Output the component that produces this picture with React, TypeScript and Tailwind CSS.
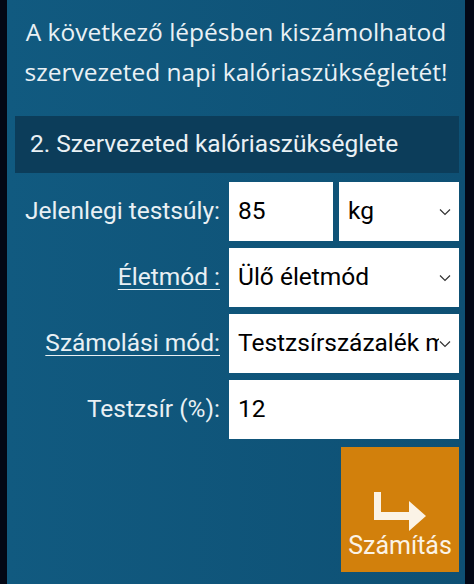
import React from 'react';

function Chevron() {
  return (
    <svg width="12" height="8" viewBox="0 0 12 8" className="shrink-0">
      <path d="M1 1.5 L6 6.5 L11 1.5" fill="none" stroke="#333" strokeWidth="1.2" />
    </svg>
  );
}

function TextBox({ value }: { value: string }) {
  return (
    <div className="h-[59px] bg-white flex items-center pl-[9px] text-[24.5px] text-black overflow-hidden whitespace-nowrap">
      {value}
    </div>
  );
}

function SelectBox({ value }: { value: string }) {
  return (
    <div className="h-[59px] bg-white flex items-center pl-[9px] pr-[8px] text-[24.5px] text-black">
      <span className="flex-1 overflow-hidden whitespace-nowrap">{value}</span>
      <Chevron />
    </div>
  );
}

function Label({ children, underline }: { children: React.ReactNode; underline?: boolean }) {
  return (
    <div className="h-[59px] flex items-center justify-end text-[24.5px] text-[#e9f0f4] whitespace-nowrap">
      <span className={underline ? 'underline underline-offset-[4px] decoration-1' : ''}>{children}</span>
    </div>
  );
}

function ArrowIcon() {
  return (
    <svg width="52" height="39" viewBox="0 0 52 39">
      <path d="M0 0 H7 V20 H35 V9 L52 24 L35 39 V28 H0 Z" fill="#fbf3e6" />
    </svg>
  );
}

export default function App() {
  return (
    <div className="w-full h-[584px] bg-[#030816] flex pl-[7px] pr-[9px] overflow-hidden">
      <div className="flex-1 bg-gradient-to-r from-[#115a80] to-[#0e5074] flex flex-col">
        <p className="pt-[12px] text-center text-[24.5px] leading-[40px] text-[#eaf1f5] font-['Open_Sans',sans-serif]">
          A következő lépésben kiszámolhatod
          <br />
          szervezeted napi kalóriaszükségletét!
        </p>
        <div className="font-['Roboto',sans-serif] ml-[8px] mr-[6px]">
          <div className="mt-[24px] h-[57px] bg-[#0c3d5a] flex items-center pl-[15px] text-[24.5px] text-[#eaf1f5]">
            2. Szervezeted kalóriaszükséglete
          </div>
          <div className="mt-[9px] grid grid-cols-[1fr_230px] gap-x-[9px] gap-y-[7px]">
            <Label>Jelenlegi testsúly:</Label>
            <div className="grid grid-cols-[104px_1fr] gap-[6px]">
              <TextBox value="85" />
              <SelectBox value="kg" />
            </div>
            <Label underline>Életmód :</Label>
            <SelectBox value="Ülő életmód" />
            <Label underline>Számolási mód:</Label>
            <SelectBox value="Testzsírszázalék módszer" />
            <Label>Testzsír (%):</Label>
            <TextBox value="12" />
          </div>
          <div className="mt-[8px] flex justify-end">
            <button className="w-[118px] h-[125px] bg-[#d2800c] flex flex-col items-center pt-[45px]">
              <ArrowIcon />
              <span className="mt-[1px] text-[25px] leading-[28px] text-[#fbf3e6]">Számítás</span>
            </button>
          </div>
        </div>
      </div>
    </div>
  );
}
